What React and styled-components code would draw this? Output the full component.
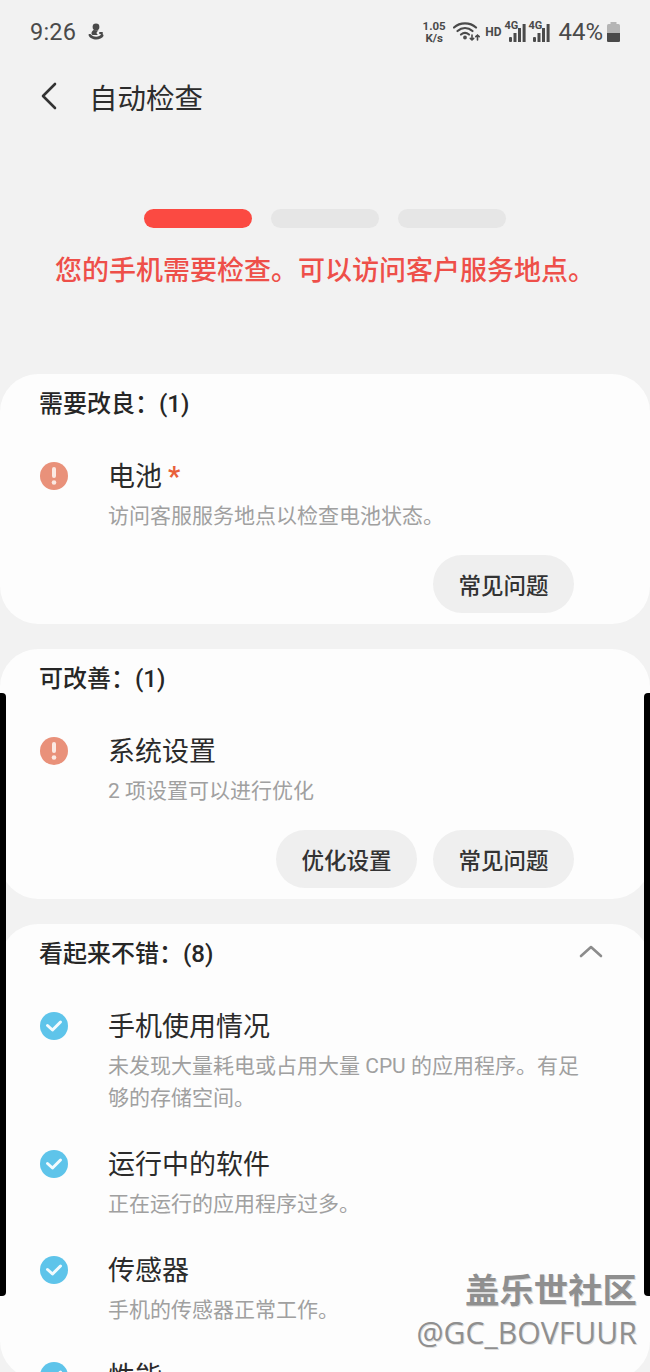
import React from "react";
import styled, { createGlobalStyle } from "styled-components";

const GlobalStyle = createGlobalStyle`
  html, body {
    margin: 0;
    padding: 0;
    background: #f2f2f2;
  }
  * {
    box-sizing: border-box;
  }
`;

const Screen = styled.div`
  position: relative;
  width: 650px;
  height: 1372px;
  overflow: hidden;
  background: #f2f2f2;
  font-family: "Roboto", "Noto Sans CJK SC", sans-serif;
  color: #252525;
`;

const StatusBar = styled.div`
  height: 62px;
  padding: 16px 30px 0 30px;
  display: flex;
  justify-content: space-between;
  align-items: flex-start;
  color: #4a4a4a;
`;

const StatusLeft = styled.div`
  display: flex;
  align-items: center;
  gap: 12px;
  height: 32px;
`;

const Clock = styled.span`
  font-size: 23.5px;
  letter-spacing: 0.2px;
`;

const StatusRight = styled.div`
  display: flex;
  align-items: center;
  height: 32px;
`;

const Speed = styled.span`
  width: 26px;
  margin-right: 6px;
  font-size: 11.5px;
  font-weight: 700;
  line-height: 12px;
  text-align: center;
`;

const Hd = styled.span`
  margin: 0 1px 0 5px;
  font-size: 12px;
  font-weight: 700;
`;

const Signal = styled.span`
  position: relative;
  width: 24px;
  height: 20px;
  display: block;
`;

const SignalLabel = styled.span`
  position: absolute;
  top: -2px;
  left: 2px;
  font-size: 11px;
  line-height: 11px;
  font-weight: 700;
`;

const Percent = styled.span`
  margin: 0 4px 0 8px;
  font-size: 24px;
`;

const Header = styled.div`
  height: 68px;
  padding: 0 0 0 40px;
  display: flex;
  align-items: center;
  gap: 31px;
`;

const Title = styled.h1`
  margin: 0;
  font-size: 28.5px;
  font-weight: 400;
  color: #2c2c2c;
`;

const Progress = styled.div`
  margin-top: 79px;
  display: flex;
  justify-content: center;
  gap: 19px;
`;

const Step = styled.div`
  width: 108px;
  height: 19px;
  border-radius: 10px;
  background: ${(p) => (p.$active ? "#fb4a42" : "#e6e6e6")};
`;

const Notice = styled.p`
  margin: 21px 0 0;
  height: 125px;
  font-size: 27px;
  line-height: 44px;
  font-weight: 500;
  text-align: center;
  white-space: nowrap;
  color: #ee4f49;
`;

const CardList = styled.div`
  display: flex;
  flex-direction: column;
  gap: 25px;
`;

const Card = styled.section`
  height: ${(p) => p.$height || "250px"};
  padding: 8px 39px 0;
  background: #fdfdfd;
  border-radius: 38px;
`;

const CardHead = styled.div`
  display: flex;
  align-items: center;
  justify-content: space-between;
  height: 38px;
  padding-right: 8px;
`;

const CardTitle = styled.h2`
  margin: 0;
  font-size: 24px;
  font-weight: 500;
  color: #262626;
`;

const Item = styled.div`
  display: grid;
  grid-template-columns: 69px 1fr;
  margin-top: ${(p) => p.$gap || "38px"};
`;

const IconCell = styled.div`
  padding: 4px 0 0 1px;
`;

const StatusDot = styled.span`
  display: flex;
  align-items: center;
  justify-content: center;
  width: 28px;
  height: 28px;
  border-radius: 50%;
  background: ${(p) => p.$color};
`;

const ItemTitle = styled.div`
  font-size: 27px;
  line-height: 38px;
  color: #2b2b2b;
`;

const Star = styled.span`
  margin-left: 6px;
  font-weight: 700;
  color: #e8603a;
`;

const ItemText = styled.div`
  margin-top: 4px;
  padding-right: 20px;
  font-size: 21px;
  line-height: 32px;
  color: #a0a0a0;
`;

const Actions = styled.div`
  display: flex;
  justify-content: flex-end;
  gap: 16px;
  margin: 23px 37px 0 0;
`;

const Action = styled.button`
  width: 141px;
  height: 58px;
  border: 0;
  border-radius: 29px;
  padding: 0;
  background: #efefef;
  font-family: inherit;
  font-size: 22.5px;
  font-weight: 500;
  color: #333;
`;

const SideBar = styled.div`
  position: absolute;
  top: 693px;
  ${(p) => p.$side}: 0;
  width: 6px;
  height: 603px;
  background: #000;
  border-radius: ${(p) => (p.$side === "left" ? "0 4px 4px 0" : "4px 0 0 4px")};
`;

const Watermark = styled.div`
  position: absolute;
  right: 13px;
  bottom: 19px;
  text-align: right;
  color: #8f8f8f;
  text-shadow: 1px 1px 0 #dcdcdc;
`;

const WatermarkName = styled.div`
  font-size: 34.4px;
  line-height: 44px;
  font-weight: 700;
`;

const WatermarkUser = styled.div`
  font-family: "Open Sans", "Liberation Sans", sans-serif;
  font-size: 30.2px;
  line-height: 40px;
`;

const Warning = () => (
  <StatusDot $color="#e9917a">
    <svg width="6" height="18" viewBox="0 0 6 18">
      <rect x="1" y="0" width="4" height="11" rx="2" fill="#fbe9e3" />
      <circle cx="3" cy="15.5" r="2.3" fill="#fbe9e3" />
    </svg>
  </StatusDot>
);

const Check = () => (
  <StatusDot $color="#5ec4ea">
    <svg width="18" height="14" viewBox="0 0 18 14">
      <path d="M2.5 6.5 L7.5 11 L15.5 3" fill="none" stroke="#f3fbfe" strokeWidth="3" strokeLinecap="round" strokeLinejoin="round" />
    </svg>
  </StatusDot>
);

const BackIcon = () => (
  <svg width="18" height="30" viewBox="0 0 18 30">
    <path d="M15 3 L3 15 L15 27" fill="none" stroke="#333" strokeWidth="2.6" strokeLinecap="round" strokeLinejoin="round" />
  </svg>
);

const Chevron = () => (
  <svg width="24" height="14" viewBox="0 0 24 14">
    <path d="M2 12 L12 3 L22 12" fill="none" stroke="#8c8c8c" strokeWidth="2.6" strokeLinecap="round" strokeLinejoin="round" />
  </svg>
);

const PenguinIcon = () => (
  <svg width="16" height="18" viewBox="0 0 16 18" fill="#4a4a4a">
    <circle cx="8" cy="4" r="3.4" />
    <path d="M5.5 7 C3 9 3 11 4.5 12 L10 12 C8 10.5 8 9 10.5 7.5 Z" />
    <path d="M0.5 12 C2 17.5 13 18 15.5 13 C15.8 11.5 14 10.5 13 11 C12 14 6 15 3 11.5 C2 10.8 0.5 11 0.5 12 Z" />
    <rect x="11" y="9" width="4" height="2" rx="1" />
  </svg>
);

const WifiIcon = () => (
  <svg width="27" height="22" viewBox="0 0 27 22" fill="none" stroke="#4a4a4a" strokeWidth="2.2" strokeLinecap="round">
    <path d="M1 6.5 C7 1 17 1 23 6.5" />
    <path d="M4.5 10 C9 6 15 6 19.5 10" />
    <path d="M8 13.5 C10.5 11.5 13.5 11.5 16 13.5" />
    <circle cx="12" cy="16.5" r="0.8" fill="#4a4a4a" />
    <path d="M19 14 V19 M17.3 17.4 L19 19 L20.7 17.4" strokeWidth="1.6" />
    <path d="M24.5 19 V14 M22.8 15.6 L24.5 14 L26.2 15.6" strokeWidth="1.6" />
  </svg>
);

const Bars = () => (
  <svg width="17" height="18" viewBox="0 0 17 18" style={{ position: "absolute", right: 0, bottom: 0 }} fill="#4a4a4a">
    <rect x="0" y="13" width="3" height="5" rx="1" />
    <rect x="4.5" y="9" width="3" height="9" />
    <rect x="9" y="4" width="3" height="14" />
    <rect x="13.6" y="0" width="3" height="18" />
  </svg>
);

const Battery = () => (
  <svg width="13" height="20" viewBox="0 0 13 20">
    <rect x="3.5" y="0" width="6" height="2" fill="#b5b5b5" />
    <rect x="0" y="2" width="13" height="18" rx="1.5" fill="#b5b5b5" />
    <path d="M0 11 H13 V18.5 A1.5 1.5 0 0 1 11.5 20 H1.5 A1.5 1.5 0 0 1 0 18.5 Z" fill="#4a4a4a" />
  </svg>
);

const SignalIcon = () => (
  <Signal>
    <SignalLabel>4G</SignalLabel>
    <Bars />
  </Signal>
);

export default function App() {
  return (
    <Screen>
      <GlobalStyle />
      <StatusBar>
        <StatusLeft>
          <Clock>9:26</Clock>
          <PenguinIcon />
        </StatusLeft>
        <StatusRight>
          <Speed>1.05<br />K/s</Speed>
          <WifiIcon />
          <Hd>HD</Hd>
          <SignalIcon />
          <SignalIcon />
          <Percent>44%</Percent>
          <Battery />
        </StatusRight>
      </StatusBar>

      <Header>
        <BackIcon />
        <Title>自动检查</Title>
      </Header>

      <Progress>
        <Step $active />
        <Step />
        <Step />
      </Progress>
      <Notice>您的手机需要检查。可以访问客户服务地点。</Notice>

      <CardList>
        <Card>
          <CardHead>
            <CardTitle>需要改良：(1)</CardTitle>
          </CardHead>
          <Item>
            <IconCell><Warning /></IconCell>
            <div>
              <ItemTitle>电池<Star>*</Star></ItemTitle>
              <ItemText>访问客服服务地点以检查电池状态。</ItemText>
            </div>
          </Item>
          <Actions>
            <Action>常见问题</Action>
          </Actions>
        </Card>

        <Card>
          <CardHead>
            <CardTitle>可改善：(1)</CardTitle>
          </CardHead>
          <Item>
            <IconCell><Warning /></IconCell>
            <div>
              <ItemTitle>系统设置</ItemTitle>
              <ItemText>2 项设置可以进行优化</ItemText>
            </div>
          </Item>
          <Actions>
            <Action>优化设置</Action>
            <Action>常见问题</Action>
          </Actions>
        </Card>

        <Card $height="455px">
          <CardHead>
            <CardTitle>看起来不错：(8)</CardTitle>
            <Chevron />
          </CardHead>
          <Item>
            <IconCell><Check /></IconCell>
            <div>
              <ItemTitle>手机使用情况</ItemTitle>
              <ItemText>未发现大量耗电或占用大量 CPU 的应用程序。有足够的存储空间。</ItemText>
            </div>
          </Item>
          <Item $gap="32px">
            <IconCell><Check /></IconCell>
            <div>
              <ItemTitle>运行中的软件</ItemTitle>
              <ItemText>正在运行的应用程序过多。</ItemText>
            </div>
          </Item>
          <Item $gap="32px">
            <IconCell><Check /></IconCell>
            <div>
              <ItemTitle>传感器</ItemTitle>
              <ItemText>手机的传感器正常工作。</ItemText>
            </div>
          </Item>
          <Item $gap="32px">
            <IconCell><Check /></IconCell>
            <div>
              <ItemTitle>性能</ItemTitle>
            </div>
          </Item>
        </Card>
      </CardList>

      <SideBar $side="left" />
      <SideBar $side="right" />
      <Watermark>
        <WatermarkName>盖乐世社区</WatermarkName>
        <WatermarkUser>@GC_BOVFUUR</WatermarkUser>
      </Watermark>
    </Screen>
  );
}
